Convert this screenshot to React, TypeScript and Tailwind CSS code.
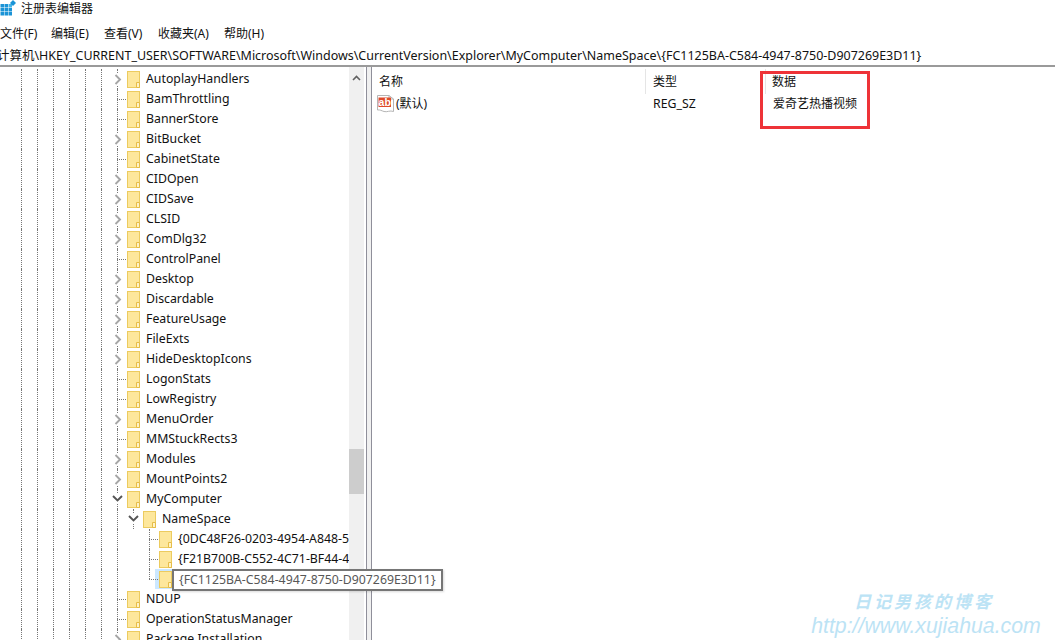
import React from "react";

const FONT = '"Noto Sans", "Noto Sans CJK SC", sans-serif';

type Kind = "closed" | "leaf" | "open";
const level1: [string, Kind][] = [
  ["AutoplayHandlers", "closed"], ["BamThrottling", "leaf"], ["BannerStore", "leaf"], ["BitBucket", "closed"],
  ["CabinetState", "leaf"], ["CIDOpen", "closed"], ["CIDSave", "closed"], ["CLSID", "closed"],
  ["ComDlg32", "closed"], ["ControlPanel", "leaf"], ["Desktop", "closed"], ["Discardable", "closed"],
  ["FeatureUsage", "closed"], ["FileExts", "closed"], ["HideDesktopIcons", "closed"], ["LogonStats", "leaf"],
  ["LowRegistry", "leaf"], ["MenuOrder", "closed"], ["MMStuckRects3", "leaf"], ["Modules", "closed"],
  ["MountPoints2", "closed"],
];

function Folder() {
  return (
    <svg width="13" height="17" viewBox="0 0 13 17" className="shrink-0">
      <rect x="0.5" y="0.5" width="12" height="16" fill="#fde79c" stroke="#eccb5f" />
      <path d="M9.5 16.5V11.5H12.5V16.5Z" fill="#fff3c8" stroke="#e6bd48" />
    </svg>
  );
}

function Chevron({ open }: { open?: boolean }) {
  return open ? (
    <svg width="11" height="11" viewBox="0 0 11 11" className="absolute -left-[5px] top-[4px] bg-white">
      <path d="M1 3l4.5 4.5L10 3" fill="none" stroke="#555" strokeWidth="1.9" />
    </svg>
  ) : (
    <svg width="9" height="11" viewBox="0 0 9 11" className="absolute -left-[3px] top-[5px] bg-white">
      <path d="M1.5 1l4.5 4.5L1.5 10" fill="none" stroke="#a6a6a6" strokeWidth="1.9" />
    </svg>
  );
}

function Guides({ count }: { count: number }) {
  return (
    <>
      {Array.from({ length: count }).map((_, i) => (
        <div key={i} className="w-4 h-5 shrink-0 border-l border-dotted border-[#777]" />
      ))}
    </>
  );
}

function Connector({ kind, last }: { kind: Kind; last?: boolean }) {
  return (
    <div className="relative w-[10px] h-5 shrink-0">
      {kind === "leaf" ? (
        <>
          <div className={`absolute left-0 top-0 border-l border-dotted border-[#777] ${last ? "h-[10px]" : "h-5"}`} />
          <div className="absolute left-0 top-[10px] w-[9px] border-t border-dotted border-[#777]" />
        </>
      ) : (
        <>
          <div className="absolute left-0 top-0 h-5 border-l border-dotted border-[#777]" />
          <Chevron open={kind === "open"} />
        </>
      )}
    </div>
  );
}

function Row({ name, kind }: { name: string; kind: Kind }) {
  return (
    <div className="flex items-center h-5 pl-[21px]">
      <Guides count={6} />
      <Connector kind={kind} />
      <Folder />
      <span className="ml-[6px] text-[12.3px] leading-5 text-[#111] whitespace-nowrap">{name}</span>
    </div>
  );
}

function Level3({ name, selected, last }: { name: string; selected?: boolean; last?: boolean }) {
  return (
    <div className="relative flex items-center h-5 pl-[21px]">
      <Guides count={7} />
      <div className="w-4 h-5 shrink-0" />
      <Connector kind="leaf" last={last} />
      <div className={selected ? "bg-[#cce8ff] -ml-1 pl-1 pr-2 h-5 flex items-center shrink-0" : "flex items-center shrink-0"}>
        <Folder />
      </div>
      {!selected && (
        <span className="ml-[6px] flex-1 min-w-0 overflow-hidden text-[12.3px] leading-5 text-[#111] whitespace-nowrap">
          {name}
        </span>
      )}
      {selected && (
        <div className="absolute left-[172px] top-0 z-20 h-[22px] flex items-center px-[5px] bg-white border-2 border-[#767676] shadow-[1px_1px_2px_rgba(0,0,0,0.15)] text-[12.3px] text-[#575757] whitespace-nowrap">
          {name}
        </div>
      )}
    </div>
  );
}

function AbIcon() {
  return (
    <svg width="17" height="18" viewBox="0 0 17 18" className="shrink-0">
      <path d="M0.5 0.5H12L16.5 4V16.5C13 15 10 17.5 7 16.5C4.5 15.8 3 14.5 0.5 15Z" fill="#fff" stroke="#b5b5b5" />
      <path d="M12 0.5V4H16.5" fill="none" stroke="#b5b5b5" />
      <rect x="1.5" y="2.5" width="12.5" height="9.5" fill="#de4a2a" />
      <text x="7.7" y="10.5" textAnchor="middle" fontSize="10.5" fontWeight="700" fill="#fff" fontFamily="Liberation Sans, sans-serif">ab</text>
    </svg>
  );
}

function RegIcon() {
  return (
    <svg width="16" height="16" viewBox="0 0 16 16" className="shrink-0">
      {[0, 1, 2].map((r) =>
        [0, 1, 2].map((c) => (
          <rect key={`${r}${c}`} x={c * 4 + 0.5} y={r * 4 + 4} width="3.5" height="3.5" fill={c === 2 && r === 0 ? "#45b5e8" : "#1b93d6"} />
        ))
      )}
      <path d="M13 0l3 3-3 3-3-3z" fill="#1b93d6" />
    </svg>
  );
}

export default function App() {
  return (
    <div className="relative w-[1055px] h-[640px] overflow-hidden bg-white text-black" style={{ fontFamily: FONT }}>
      <div className="flex items-center h-4 gap-[5px]">
        <RegIcon />
        <span className="text-[12px] leading-4 pt-[2px] text-[#111]">注册表编辑器</span>
      </div>
      <div className="flex items-center h-[26px] pt-[10px] text-[12px] text-[#111] whitespace-nowrap">
        <span className="w-[51px]">文件(F)</span>
        <span className="w-[53px]">编辑(E)</span>
        <span className="w-[54px]">查看(V)</span>
        <span className="w-[66px]">收藏夹(A)</span>
        <span>帮助(H)</span>
      </div>
      <div className="h-[25px] pt-[5px] flex items-center overflow-hidden border-b-2 border-[#9a9a9a]">
        <span className="-ml-[3px] text-[12.47px] text-[#111] whitespace-nowrap">
          计算机\HKEY_CURRENT_USER\SOFTWARE\Microsoft\Windows\CurrentVersion\Explorer\MyComputer\NameSpace\{"{FC1125BA-C584-4947-8750-D907269E3D11}"}
        </span>
      </div>
      <div className="flex h-[573px]">
        <div className="w-[349px] shrink-0 z-10 pt-[2px]">
          {level1.map(([n, k]) => (
            <Row key={n} name={n} kind={k} />
          ))}
          <Row name="MyComputer" kind="open" />
          <div className="flex items-center h-5 pl-[21px]">
            <Guides count={7} />
            <Connector kind="open" />
            <Folder />
            <span className="ml-[6px] text-[12.3px] leading-5 text-[#111] whitespace-nowrap">NameSpace</span>
          </div>
          <Level3 name="{0DC48F26-0203-4954-A848-5" />
          <Level3 name="{F21B700B-C552-4C71-BF44-4" />
          <Level3 name="{FC1125BA-C584-4947-8750-D907269E3D11}" selected last />
          <Row name="NDUP" kind="leaf" />
          <Row name="OperationStatusManager" kind="leaf" />
          <Row name="Package Installation" kind="closed" />
        </div>
        <div className="w-[15px] shrink-0 bg-[#f0f0f0] flex flex-col">
          <div className="h-[21px] flex items-center justify-center">
            <svg width="9" height="6" viewBox="0 0 9 6">
              <path d="M1 5l3.5-3.5L8 5" fill="none" stroke="#606060" strokeWidth="1.6" />
            </svg>
          </div>
          <div className="h-[361px]" />
          <div className="h-[45px] bg-[#cdcdcd]" />
        </div>
        <div className="w-[2px] shrink-0 bg-white" />
        <div className="w-[6px] shrink-0 bg-[#f0f0f0] border-x border-[#8f8f9a]" />
        <div className="relative flex-1 min-w-0 pt-[2px]">
          <div className="flex h-[25px] text-[12px] text-[#111]">
            <div className="w-[274px] pl-[7px] flex items-center border-r border-[#e5e5e5]">名称</div>
            <div className="w-[120px] pl-[7px] flex items-center border-r border-[#e5e5e5]">类型</div>
            <div className="pl-[6px] flex items-center">数据</div>
          </div>
          <div className="flex h-[20px] items-center text-[12px] text-[#111]">
            <div className="w-[274px] pl-[5px] flex items-center gap-[2px] whitespace-nowrap">
              <AbIcon />
              <span>(默认)</span>
            </div>
            <div className="w-[120px] pl-[7px] text-[12.3px]">REG_SZ</div>
            <div className="pl-[7px] whitespace-nowrap">爱奇艺热播视频</div>
          </div>
          <div className="absolute left-[388px] top-[4px] w-[110px] h-[58px] border-[3px] border-[#ee3338]" />
        </div>
      </div>
      <div className="absolute left-[811px] top-[590px] w-[230px] z-30 flex flex-col items-center text-[#bce3f5]">
        <div className="text-[17px] leading-6 italic font-bold tracking-[3px] pr-[4px] whitespace-nowrap">日记男孩的博客</div>
        <div className="text-[21.3px] leading-6 italic whitespace-nowrap" style={{ fontFamily: '"Liberation Sans", sans-serif' }}>
          http://www.xujiahua.com
        </div>
      </div>
    </div>
  );
}
